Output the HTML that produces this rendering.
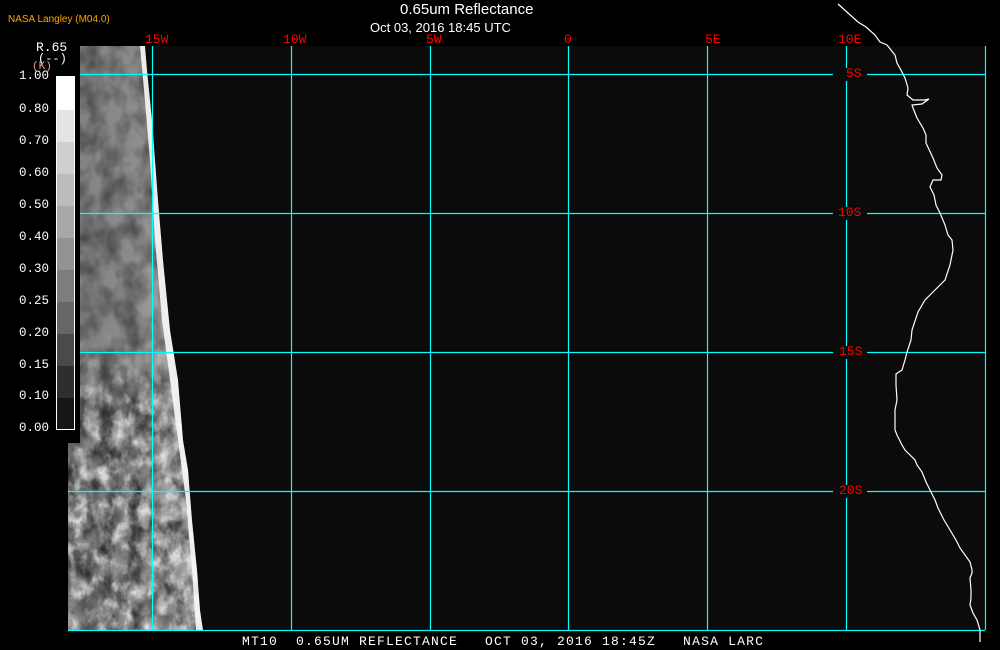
<!DOCTYPE html>
<html><head><meta charset="utf-8"><style>
html,body{margin:0;padding:0;background:#000;}
body{width:1000px;height:650px;position:relative;overflow:hidden;font-family:"Liberation Sans",sans-serif;}
.t{position:absolute;white-space:pre;}
</style></head><body>
<svg width="1000" height="650" style="position:absolute;left:0;top:0">
<defs>
<filter id="n1" x="0" y="0" width="100%" height="100%">
<feTurbulence type="fractalNoise" baseFrequency="0.05 0.04" numOctaves="3" seed="4"/>
<feColorMatrix type="matrix" values="0 0 0 0 0  0 0 0 0 0  0 0 0 0 0  0 0 0 1.8 -0.6"/>
</filter>
<filter id="n2" x="0" y="0" width="100%" height="100%">
<feTurbulence type="fractalNoise" baseFrequency="0.08 0.06" numOctaves="4" seed="11"/>
<feColorMatrix type="matrix" values="0 0 0 0 1  0 0 0 0 1  0 0 0 0 1  0 0 0 2.6 -1.1"/>
</filter>
<filter id="n3" x="0" y="0" width="100%" height="100%">
<feTurbulence type="fractalNoise" baseFrequency="0.07 0.05" numOctaves="4" seed="23"/>
<feColorMatrix type="matrix" values="0 0 0 0 0  0 0 0 0 0  0 0 0 0 0  0 0 0 2.6 -1.2"/>
</filter>
<linearGradient id="g1" x1="0" x2="1" y1="0" y2="0">
<stop offset="0" stop-color="#808080"/><stop offset="0.5" stop-color="#8c8c8c"/><stop offset="0.8" stop-color="#b0b0b0"/><stop offset="1" stop-color="#dcdcdc"/>
</linearGradient>
<linearGradient id="fade" x1="0" x2="0" y1="0" y2="1">
<stop offset="0" stop-color="#fff" stop-opacity="0"/><stop offset="0.3" stop-color="#fff" stop-opacity="1"/><stop offset="1" stop-color="#fff" stop-opacity="1"/>
</linearGradient>
<mask id="m1"><rect x="60" y="330" width="150" height="310" fill="url(#fade)"/></mask>
<clipPath id="strip"><polygon points="80,46 145,46 147,70 152,120 158,200 163,260 170,330 178,380 183,440 188,470 192,520 197,570 200,610 203,630 68,630 68,440 80,440"/></clipPath>
</defs>
<rect x="68" y="46" width="917" height="584" fill="#0b0b0b"/>
<g clip-path="url(#strip)">
<rect x="60" y="40" width="150" height="600" fill="url(#g1)"/>
<rect x="60" y="40" width="150" height="600" filter="url(#n1)" opacity="0.5"/>
<g mask="url(#m1)">
<rect x="60" y="330" width="150" height="310" filter="url(#n2)" opacity="0.75"/>
<rect x="60" y="330" width="150" height="310" filter="url(#n3)" opacity="0.6"/>
</g>
<polygon points="140,46 145,46 147,70 152,120 158,200 163,260 170,330 178,380 183,440 188,470 192,520 197,570 200,610 203,630 196,630 192,570 186,500 178,440 170,380 162,320 155,240 150,160 144,90" fill="#f8f8f8" opacity="0.9"/>
</g>
<g stroke="#00ffff" stroke-width="1.2" fill="none">
<line x1="68" y1="74.5" x2="833" y2="74.5"/><line x1="867" y1="74.5" x2="985" y2="74.5"/>
<line x1="68" y1="213.5" x2="833" y2="213.5"/><line x1="867" y1="213.5" x2="985" y2="213.5"/>
<line x1="68" y1="352.5" x2="833" y2="352.5"/><line x1="867" y1="352.5" x2="985" y2="352.5"/>
<line x1="68" y1="491.5" x2="833" y2="491.5"/><line x1="867" y1="491.5" x2="985" y2="491.5"/>
<line x1="68" y1="630.5" x2="985" y2="630.5"/>
<line x1="152.5" y1="46" x2="152.5" y2="630"/>
<line x1="291.5" y1="46" x2="291.5" y2="630"/>
<line x1="430.5" y1="46" x2="430.5" y2="630"/>
<line x1="568.5" y1="46" x2="568.5" y2="630"/>
<line x1="707.5" y1="46" x2="707.5" y2="630"/>
<line x1="846.5" y1="46" x2="846.5" y2="630"/>
<line x1="985.5" y1="46" x2="985.5" y2="630"/>
</g>
<rect x="833" y="68" width="34" height="13" fill="#0b0b0b"/>
<rect x="833" y="207" width="34" height="13" fill="#0b0b0b"/>
<rect x="833" y="346" width="34" height="13" fill="#0b0b0b"/>
<rect x="833" y="485" width="34" height="13" fill="#0b0b0b"/>
<polyline fill="none" stroke="#fff" stroke-width="1.2" points="838,4 848,13 858,22 866,27 875,35 880,42 887,45 895,55 897,63 902,72 905,78 908,88 907,95 913,100 925,100 929,99 922,104 912,105 913,108 917,118 923,128 926,135 926,143 933,158 937,168 942,175 941,180 933,180 930,187 934,195 936,205 940,213 945,225 948,235 952,240 953,250 950,265 945,280 935,290 925,300 918,312 912,330 911,340 907,352 905,360 902,370 896,374 896,385 897,400 895,410 895,430 897,435 902,445 905,450 915,460 917,465 922,472 926,482 930,490 935,500 938,508 944,520 950,530 956,540 960,548 965,555 970,562 972,570 972,573 970,578 971,590 971,598 970,605 973,613 977,620 980,630 980,642"/>
<rect x="0" y="40" width="80" height="403" fill="#000"/>
<rect x="56.5" y="76.5" width="18" height="353" fill="#fff" stroke="#fff"/>
<g>
<rect x="57" y="110" width="17" height="32" fill="#e4e4e4"/>
<rect x="57" y="142" width="17" height="32" fill="#cfcfcf"/>
<rect x="57" y="174" width="17" height="32" fill="#bcbcbc"/>
<rect x="57" y="206" width="17" height="32" fill="#a8a8a8"/>
<rect x="57" y="238" width="17" height="32" fill="#939393"/>
<rect x="57" y="270" width="17" height="32" fill="#7d7d7d"/>
<rect x="57" y="302" width="17" height="32" fill="#666"/>
<rect x="57" y="334" width="17" height="32" fill="#4a4a4a"/>
<rect x="57" y="366" width="17" height="32" fill="#2e2e2e"/>
<rect x="57" y="398" width="17" height="31" fill="#161616"/>
</g>
</svg>
<div class="t" style="left:8px;top:14px;font-size:10px;color:#ffa500">NASA Langley (M04.0)</div>
<div class="t" style="left:400px;top:1px;font-size:15px;color:#fff">0.65um Reflectance</div>
<div class="t" style="left:370px;top:20px;font-size:13px;color:#fff">Oct 03, 2016 18:45 UTC</div>
<div style="position:absolute;left:0;top:0;font-family:'Liberation Mono',monospace;font-size:13px;">
<div class="t" style="left:145px;top:32px;color:#f00">15W</div>
<div class="t" style="left:283px;top:32px;color:#f00">10W</div>
<div class="t" style="left:426px;top:32px;color:#f00">5W</div>
<div class="t" style="left:564px;top:32px;color:#f00">0</div>
<div class="t" style="left:705px;top:32px;color:#f00">5E</div>
<div class="t" style="left:838px;top:32px;color:#f00">10E</div>
<div class="t" style="left:846px;top:66px;color:#f00">5S</div>
<div class="t" style="left:838px;top:205px;color:#f00">10S</div>
<div class="t" style="left:839px;top:344px;color:#f00">15S</div>
<div class="t" style="left:839px;top:483px;color:#f00">20S</div>
<div class="t" style="left:36px;top:40px;color:#fff">R.65</div>
<div class="t" style="left:38px;top:52px;color:#fff;font-size:12px">(--)</div>
<div class="t" style="left:32px;top:61px;color:#f4a080;font-size:11px">(K)</div>
<div class="t" style="left:19px;top:69px;color:#fff;font-size:12.5px">1.00</div>
<div class="t" style="left:19px;top:102px;color:#fff;font-size:12.5px">0.80</div>
<div class="t" style="left:19px;top:134px;color:#fff;font-size:12.5px">0.70</div>
<div class="t" style="left:19px;top:166px;color:#fff;font-size:12.5px">0.60</div>
<div class="t" style="left:19px;top:198px;color:#fff;font-size:12.5px">0.50</div>
<div class="t" style="left:19px;top:230px;color:#fff;font-size:12.5px">0.40</div>
<div class="t" style="left:19px;top:262px;color:#fff;font-size:12.5px">0.30</div>
<div class="t" style="left:19px;top:294px;color:#fff;font-size:12.5px">0.25</div>
<div class="t" style="left:19px;top:326px;color:#fff;font-size:12.5px">0.20</div>
<div class="t" style="left:19px;top:358px;color:#fff;font-size:12.5px">0.15</div>
<div class="t" style="left:19px;top:389px;color:#fff;font-size:12.5px">0.10</div>
<div class="t" style="left:19px;top:421px;color:#fff;font-size:12.5px">0.00</div>
<div class="t" style="left:242px;top:634px;color:#fff;font-size:13px;letter-spacing:1.2px">MT10  0.65UM REFLECTANCE   OCT 03, 2016 18:45Z   NASA LARC</div>
</div>
</body></html>
